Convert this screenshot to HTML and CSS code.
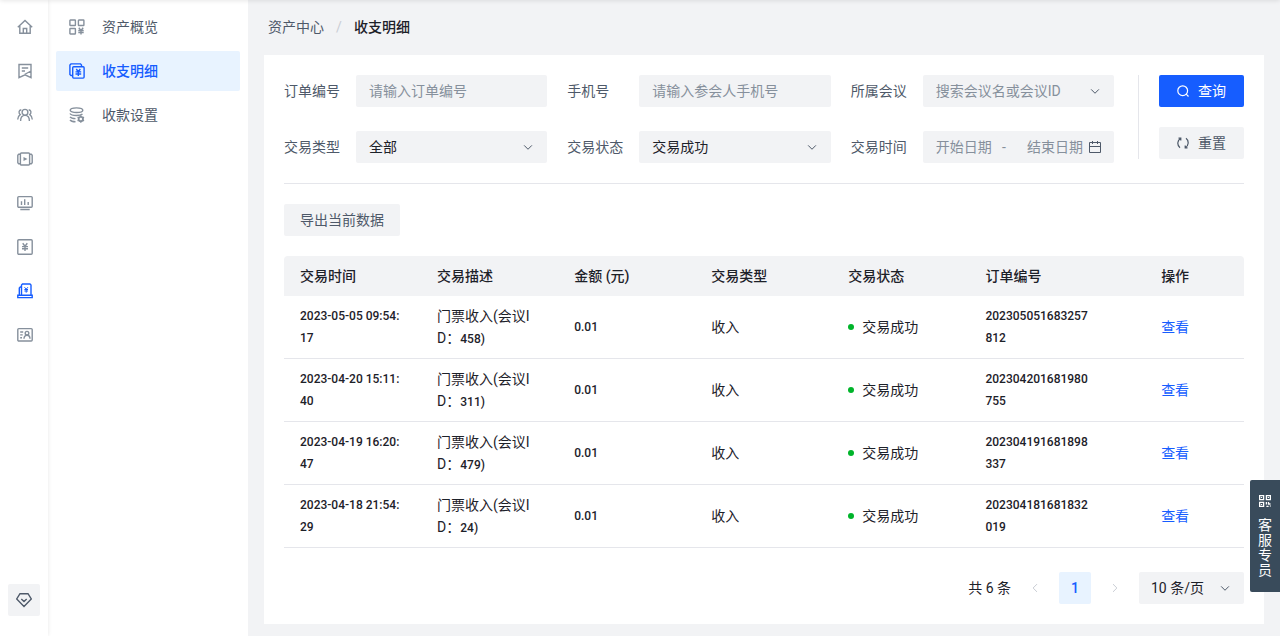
FILE: index.html
```html
<!DOCTYPE html>
<html lang="zh-CN">
<head>
    <meta charset="UTF-8">
    <meta name="viewport" content="width=device-width, initial-scale=1.0">
    <title>收支明细</title>
    <link rel="stylesheet" href="styles.css">
</head>
<body>
    <svg class="defs" aria-hidden="true">
        <symbol id="down" viewBox="0 0 48 48"><path d="M39.6 17.4 24 33 8.5 17.4"/></symbol>
        <symbol id="left" viewBox="0 0 48 48"><path d="M32 8.4 16.4 24 32 39.6"/></symbol>
        <symbol id="right" viewBox="0 0 48 48"><path d="m16 39.5 15.6-15.5L16 8.5"/></symbol>
    </svg>
    <div class="layout">
        <nav class="rail" aria-label="主导航">
            <a href="#" aria-label="首页"><svg class="icon" viewBox="0 0 16 16"><path d="M.8 8.300 8 1.500l7.200 6.800M2.800 7v7.300h10.400V7M6.300 14.300V9.500h3.400v4.800"/></svg></a>
            <a href="#" aria-label="会议"><svg class="icon" viewBox="0 0 16 16"><path d="M2 14.600V1.500h12v13.100L8 11.800zM4.800 5h6.400M4.800 8H8M7.500 11.500 14 8"/></svg></a>
            <a href="#" aria-label="参会人"><svg class="icon" viewBox="0 0 16 16"><circle cx="8" cy="5.300" r="2.900"/><path d="M3.600 14c0-3.400 1.800-5.600 4.400-5.600s4.400 2.200 4.400 5.600M4.300 2.700C1.700 3 1.400 6.200 3.200 7.600 1.500 8.700.8 10.300.7 12.500M11.700 2.700c2.600.3 2.900 3.500 1.100 4.900 1.700 1.100 2.400 2.700 2.500 4.900"/></svg></a>
            <a href="#" aria-label="视频"><svg class="icon" viewBox="0 0 16 16"><rect x="3.400" y="2" width="9.200" height="12" rx="1"/><path d="M3.400 3.300H1.700L.8 4.300v7.400l.9 1h1.700M12.600 3.300h1.700l.9 1v7.400l-.9 1h-1.700"/><path class="solid" d="m6.500 6 4 2-4 2z"/></svg></a>
            <a href="#" aria-label="数据"><svg class="icon" viewBox="0 0 16 16"><rect x=".8" y="1.600" width="14.400" height="10.600" rx="1"/><path d="M4.500 10V6.300M7.700 10V4.200M11.200 10V7M3.300 14.500h9.400"/></svg></a>
            <a href="#" aria-label="财务"><svg class="icon" viewBox="0 0 16 16"><rect x=".8" y=".8" width="14.400" height="14.400" rx="1"/><path d="m5.700 4.300 2.300 3 2.300-3M5 7.600h6M5 9.800h6M8 7.300V12"/></svg></a>
            <a href="#" class="on" aria-label="资产中心"><svg class="icon" viewBox="0 0 16 16"><path d="M4.500 12.200V2l1-1H13l1 1v10.200M4.500 4H3.300L2.300 5v7.200M.8 12.200h14.400v2.400H.8z"/><path stroke-width="1" d="M7.500 4.200 9.200 6.200l1.700-2M7.400 6.500h3.600M7.400 8h3.600M9.200 6.200v3.500"/></svg></a>
            <a href="#" aria-label="名片"><svg class="icon" viewBox="0 0 16 16"><rect x=".8" y="1.600" width="14.400" height="12.400" rx="1"/><circle cx="10" cy="6.200" r="1.800"/><path d="M7 11.800c0-2.200 1.200-3.600 3-3.600s3 1.400 3 3.600M3.200 5h3M3.200 7.900h2.500M3.200 10.800H5"/></svg></a>
            <button type="button" class="gem" aria-label="权益"><svg class="icon" viewBox="0 0 16 16"><path d="M4 1.700h8L15.300 7 8 14.500.7 7zM5.300 7 8 9.500 10.700 7"/></svg></button>
        </nav>
        <nav class="menu" aria-label="资产中心">
            <a href="#"><svg class="icon" viewBox="0 0 16 16"><rect x=".9" y="1" width="5.500" height="5.500" rx=".5"/><rect x="9.400" y="1" width="5.500" height="5.500" rx=".5"/><rect x=".9" y="9.500" width="5.500" height="5.500" rx=".5"/><path d="m9.800 8.800 2.200 2.700 2.200-2.700M9.300 11.500h5.400M9.300 13.500h5.400M12 11.500v4"/></svg>资产概览</a>
            <a href="#" class="on"><svg class="icon" viewBox="0 0 16 16"><path d="M3.700 12.500H2l-1.100-1V2L2 .9h9.500l1 1.100v1.700"/><rect x="3.700" y="3.700" width="11.400" height="11.400" rx="1"/><path d="m7.300 6 2 2.700 2-2.700M6.500 8.900h5.700M6.500 11h5.700M9.300 8.700V13"/></svg>收支明细</a>
            <a href="#"><svg class="icon" viewBox="0 0 16 16"><ellipse cx="7.500" cy="3.200" rx="6.300" ry="2.300"/><path d="M.9 6.500c1 1.600 3.500 2 6.600 2 2.600 0 4.600-.3 6-1.500M1 9.800c.9 1.200 2.700 1.700 5.500 1.800M1 13c.9 1.200 2.700 1.700 5.500 1.800"/><circle cx="11.800" cy="12" r="2.200" stroke-width="1.800"/><path d="M11.800 8.300v1.500M11.800 14.200v1.500M8.600 10.200l1.300.8M13.700 13l1.300.8M8.600 13.800l1.300-.8M13.700 11l1.300-.8"/></svg>收款设置</a>
        </nav>
        <main>
            <nav class="crumbs" aria-label="面包屑"><a href="#">资产中心</a><i>/</i><b>收支明细</b></nav>
            <section class="card">
                <form class="filter">
                    <div class="fields">
                        <div class="field"><label for="orderNo">订单编号</label><input id="orderNo" type="text" placeholder="请输入订单编号"></div>
                        <div class="field"><label for="phone">手机号</label><input id="phone" type="text" placeholder="请输入参会人手机号"></div>
                        <div class="field"><label for="meeting">所属会议</label><div class="select empty"><select id="meeting"><option>搜索会议名或会议ID</option></select><svg class="arrow"><use href="#down"/></svg></div></div>
                        <div class="field"><label for="type">交易类型</label><div class="select"><select id="type"><option>全部</option></select><svg class="arrow"><use href="#down"/></svg></div></div>
                        <div class="field"><label for="status">交易状态</label><div class="select"><select id="status"><option>交易成功</option></select><svg class="arrow"><use href="#down"/></svg></div></div>
                        <div class="field"><label for="start">交易时间</label><div class="range"><input id="start" type="text" placeholder="开始日期"><span>-</span><input class="end" type="text" placeholder="结束日期" aria-label="结束日期"><svg class="date" viewBox="0 0 14 14"><path d="M1.500 2.500h11v10h-11zM1.500 6.500h11M4.500 1v3M9.500 1v3"/></svg></div></div>
                    </div>
                    <div class="actions">
                        <button type="button" class="btn primary"><svg class="small" viewBox="0 0 12 12"><circle cx="5.700" cy="5.700" r="4.900"/><path d="m9.200 9.200 2.300 2.300"/></svg>查询</button>
                        <button type="reset" class="btn"><svg class="small" viewBox="0 0 12 12"><path d="M3.800 1.200C.2 3.200-.2 8.300 3 10.700M8.200 10.800c3.600-2 4-7.100.8-9.500M1.500 1.200h2.300v2.200M10.500 10.800H8.200V8.600"/></svg>重置</button>
                    </div>
                </form>
                <button type="button" class="btn export">导出当前数据</button>
                <table>
                    <colgroup><col><col><col><col><col><col class="wide"><col class="last"></colgroup>
                    <thead>
                        <tr><th>交易时间</th><th>交易描述</th><th>金额 (元)</th><th>交易类型</th><th>交易状态</th><th>订单编号</th><th>操作</th></tr>
                    </thead>
                    <tbody>
                        <tr><td class="num">2023-05-05 09:54:<br>17</td><td>门票收入(会议I<br>D：<span class="num">458)</span></td><td class="num">0.01</td><td>收入</td><td><span class="dot"></span>交易成功</td><td class="num">202305051683257<br>812</td><td><a href="#">查看</a></td></tr>
                        <tr><td class="num">2023-04-20 15:11:<br>40</td><td>门票收入(会议I<br>D：<span class="num">311)</span></td><td class="num">0.01</td><td>收入</td><td><span class="dot"></span>交易成功</td><td class="num">202304201681980<br>755</td><td><a href="#">查看</a></td></tr>
                        <tr><td class="num">2023-04-19 16:20:<br>47</td><td>门票收入(会议I<br>D：<span class="num">479)</span></td><td class="num">0.01</td><td>收入</td><td><span class="dot"></span>交易成功</td><td class="num">202304191681898<br>337</td><td><a href="#">查看</a></td></tr>
                        <tr><td class="num">2023-04-18 21:54:<br>29</td><td>门票收入(会议I<br>D：<span class="num">24)</span></td><td class="num">0.01</td><td>收入</td><td><span class="dot"></span>交易成功</td><td class="num">202304181681832<br>019</td><td><a href="#">查看</a></td></tr>
                    </tbody>
                </table>
                <div class="pager">
                    <span class="total">共 6 条</span>
                    <button type="button" class="step" aria-label="上一页" disabled><svg class="small"><use href="#left"/></svg></button>
                    <button type="button" class="step now">1</button>
                    <button type="button" class="step" aria-label="下一页" disabled><svg class="small"><use href="#right"/></svg></button>
                    <div class="select size"><select aria-label="每页条数"><option>10 条/页</option></select><svg class="arrow"><use href="#down"/></svg></div>
                </div>
            </section>
        </main>
    </div>
    <button type="button" class="service"><svg viewBox="0 0 12 12"><path d="M.6.600h4v4h-4zM7.400.600h4v4h-4zM.6 7.400h4v4h-4zM7.400 7v2.500M9.500 7v2h2M11.400 11.400v-1M7.400 11.400h2.200M2.500 2.100v1M9.400 2.100v1M2.500 8.900v1"/></svg><span>客服专员</span></button>
</body>
</html>
```
FILE: styles.css
```css
* {
    box-sizing: border-box;
}
body {
    margin: 0;
    font-family: Roboto, "Noto Sans CJK SC", sans-serif;
    font-size: 14px;
    line-height: 22px;
    color: #1d2129;
    background: #f2f3f5;
}
body::before {
    content: "";
    position: fixed;
    top: -4px;
    left: 0;
    right: 0;
    height: 4px;
    box-shadow: 0 0 5px rgba(0, 0, 0, 0.15);
    z-index: 5;
}
a {
    color: #165dff;
    text-decoration: none;
}
button, input, select {
    font: inherit;
    color: inherit;
    border: none;
    border-radius: 2px;
    background: #f2f3f5;
    outline: none;
}
svg {
    flex: none;
    fill: none;
    stroke: currentColor;
}
.solid {
    fill: currentColor;
    stroke: none;
}
.defs {
    position: absolute;
    width: 0;
    height: 0;
}
.icon {
    width: 16px;
    height: 16px;
    stroke-width: 1.4;
}
.small, .arrow {
    width: 12px;
    height: 12px;
    stroke-width: 1.2;
}
.arrow, .step .small {
    stroke-width: 4;
}
.layout {
    display: flex;
    min-height: 100vh;
}
.rail {
    width: 48px;
    flex: none;
    display: flex;
    flex-direction: column;
    align-items: center;
    gap: 4px;
    padding: 7px 0 20px;
    background: white;
    box-shadow: 0 0 4px rgba(0, 0, 0, 0.1);
    z-index: 1;
}
.rail a {
    display: flex;
    align-items: center;
    height: 40px;
    padding-left: 2px;
    color: #86909c;
}
.rail a.on {
    color: #165dff;
}
.gem {
    display: flex;
    align-items: center;
    justify-content: center;
    width: 32px;
    height: 32px;
    margin-top: auto;
    padding: 0;
    color: #4e5969;
}
.menu {
    width: 200px;
    flex: none;
    display: flex;
    flex-direction: column;
    gap: 4px;
    padding: 7px 8px;
    background: white;
}
.menu a {
    display: flex;
    align-items: center;
    gap: 17px;
    height: 40px;
    padding: 0 13px;
    border-radius: 2px;
    color: #4e5969;
}
.menu .icon {
    color: #86909c;
}
.menu a.on {
    font-weight: 500;
    background: #e8f3ff;
}
.menu a.on, .menu a.on .icon {
    color: #165dff;
}
main {
    flex: 1;
    min-width: 0;
    padding: 16px 16px 12px;
}
.crumbs {
    display: flex;
    padding: 0 4px;
    margin-bottom: 17px;
}
.crumbs a {
    color: #4e5969;
}
.crumbs i {
    width: 30px;
    text-align: center;
    font-style: normal;
    color: #c9cdd4;
}
.crumbs b {
    font-weight: 500;
}
.card {
    padding: 20px;
    background: white;
}
.filter {
    display: flex;
    padding-bottom: 20px;
    margin-bottom: 20px;
    border-bottom: 1px solid #e5e6eb;
}
.fields {
    flex: 1;
    display: grid;
    grid-template-columns: repeat(3, 1fr);
    gap: 24px 20px;
}
.field {
    display: flex;
    align-items: center;
    min-width: 0;
}
.field label {
    width: 72px;
    flex: none;
    color: #4e5969;
}
.field > input, .field > div {
    flex: 1;
    min-width: 0;
    height: 32px;
}
.field > input {
    padding: 0 13px;
}
::placeholder {
    color: #86909c;
    opacity: 1;
}
.select {
    position: relative;
    height: 32px;
}
.select select {
    width: 100%;
    height: 32px;
    padding: 0 32px 0 13px;
    appearance: none;
}
.empty select {
    color: #86909c;
}
.arrow {
    position: absolute;
    right: 13px;
    top: 10px;
    color: #4e5969;
    pointer-events: none;
}
.range {
    display: flex;
    align-items: center;
    padding: 0 12px 0 13px;
    border-radius: 2px;
    background: #f2f3f5;
    color: #86909c;
}
.range input {
    flex: 1;
    width: 0;
    min-width: 0;
    padding: 0;
}
.range .end {
    flex: none;
    width: 74px;
    padding-left: 17px;
}
.range span {
    width: 12px;
    text-align: center;
}
.date {
    width: 14px;
    height: 14px;
    margin-left: 4px;
    color: #4e5969;
}
.actions {
    display: flex;
    flex-direction: column;
    gap: 20px;
    margin-left: 24px;
    padding-left: 20px;
    border-left: 1px solid #e5e6eb;
    align-self: flex-start;
}
.btn {
    display: flex;
    align-items: center;
    gap: 9px;
    height: 32px;
    padding: 0 18px;
    color: #4e5969;
}
.primary {
    color: white;
    background: #165dff;
}
.export {
    padding: 0 16px;
}
table {
    width: 100%;
    margin: 20px 0 24px;
    table-layout: fixed;
    border-collapse: separate;
    border-spacing: 0;
}
.wide {
    width: 18.3%;
}
.last {
    width: 10.3%;
}
th, td {
    padding: 9px 16px;
    text-align: left;
}
th {
    font-weight: 500;
    background: #f2f3f5;
}
th:first-child {
    border-top-left-radius: 4px;
}
th:last-child {
    border-top-right-radius: 4px;
}
td {
    border-bottom: 1px solid #e5e6eb;
}
.num {
    font-size: 12px;
    font-weight: 500;
    white-space: nowrap;
}
td .num {
    line-height: 1;
}
.dot {
    display: inline-block;
    width: 6px;
    height: 6px;
    margin-right: 8px;
    border-radius: 50%;
    background: #00b42a;
    vertical-align: 2px;
}
.pager {
    display: flex;
    justify-content: flex-end;
    align-items: center;
    gap: 8px;
}
.step {
    display: flex;
    align-items: center;
    justify-content: center;
    width: 32px;
    height: 32px;
    padding: 0;
    color: #c9cdd4;
    background: none;
}
.step.now {
    font-weight: 500;
    color: #165dff;
    background: #e8f3ff;
}
.size {
    width: 105px;
}
.size select {
    padding-left: 12px;
}
.service {
    position: fixed;
    right: 0;
    top: 480px;
    display: flex;
    flex-direction: column;
    align-items: center;
    gap: 11px;
    width: 30px;
    padding: 15px 8px 14px;
    border-radius: 2px 0 0 2px;
    line-height: 15px;
    color: white;
    background: #394b5b;
}
.service svg {
    width: 12px;
    height: 12px;
    stroke-width: 1.3;
}
```
